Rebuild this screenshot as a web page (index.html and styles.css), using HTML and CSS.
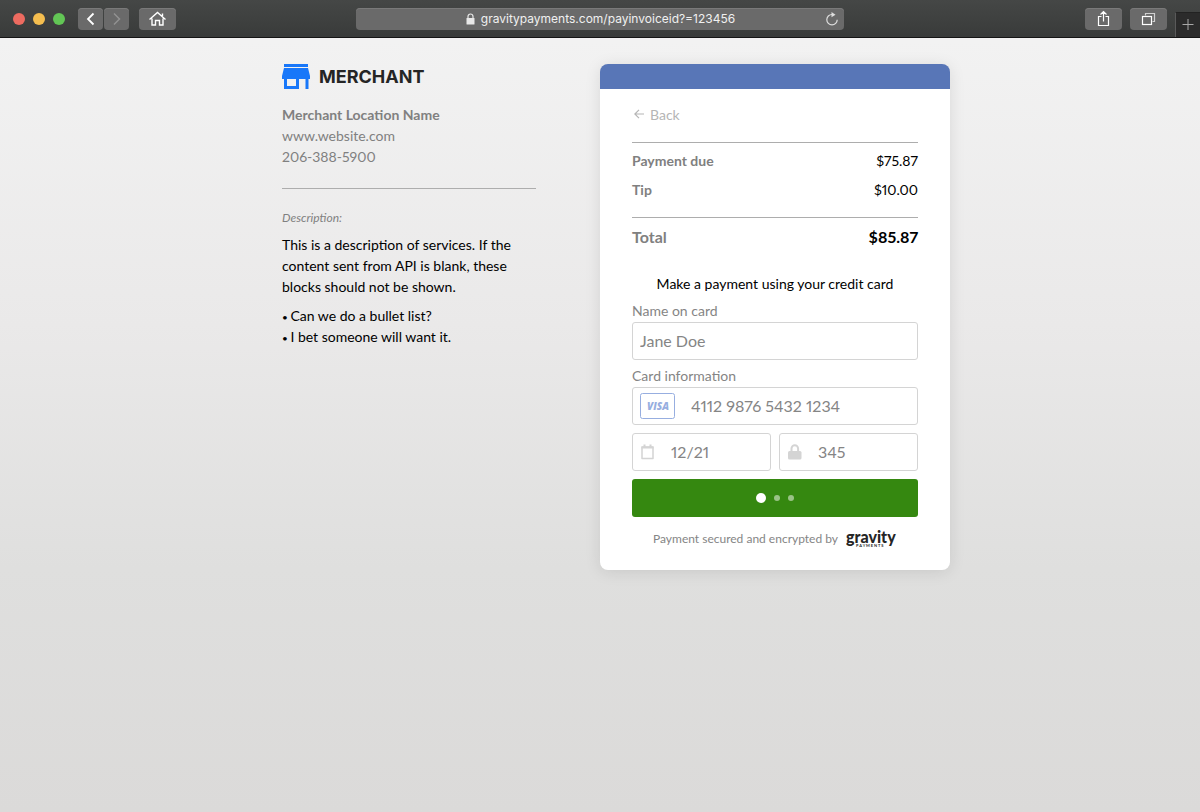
FILE: index.html
```
<!DOCTYPE html>
<html lang="en">
<head>
    <meta charset="UTF-8">
    <meta name="viewport" content="width=device-width, initial-scale=1.0">
    <title>Pay Invoice</title>
    <link rel="stylesheet" href="styles.css">
</head>
<body>

<header class="toolbar">
    <div class="toolbar-left">
        <div class="lights">
            <span class="light red"></span>
            <span class="light yellow"></span>
            <span class="light green"></span>
        </div>
        <div class="history">
            <button type="button" class="tool" aria-label="Previous page">
                <svg width="25" height="22" viewBox="0 0 25 22"><path d="M15.5 5.5L10 11l5.5 5.5" stroke="#fff" stroke-width="1.8"/></svg>
            </button>
            <button type="button" class="tool" aria-label="Next page" disabled>
                <svg width="25" height="22" viewBox="0 0 25 22"><path d="M10 5.5L15.5 11 10 16.5" stroke="#929292" stroke-width="1.5"/></svg>
            </button>
        </div>
        <button type="button" class="tool" aria-label="Home">
            <svg width="37" height="22" viewBox="0 0 37 22"><path d="M10.5 11.5L18.5 4.5l8 7M23.5 8V5.5M13 10.5v6.500h3.5v-4.500h4V17H24v-6.500" stroke="#fff" stroke-width="1.4"/></svg>
        </button>
    </div>
    <div class="address">
        <div class="address-text">
            <svg width="9" height="12" viewBox="0 0 9 12"><path d="M2 6V3.5a2.5 2.5 0 0 1 5 0V6" stroke="#e8e8e8" stroke-width="1.2"/><rect x="0.5" y="5" width="8" height="6.5" rx="0.5" fill="#e8e8e8"/></svg>
            <span>gravitypayments.com/payinvoiceid?=123456</span>
        </div>
        <button type="button" class="reload" aria-label="Reload">
            <svg width="14" height="16" viewBox="0 0 14 16"><path d="M7 3.5A5.2 5.2 0 1 0 12.2 8.7" stroke="#dedede" stroke-width="1.2"/><path d="M6.5 1l4 2.7-4 2.5z" fill="#dedede"/></svg>
        </button>
    </div>
    <div class="toolbar-right">
        <button type="button" class="tool" aria-label="Share">
            <svg width="37" height="22" viewBox="0 0 37 22"><path d="M16.5 8.5h-3V17.5h10v-9h-3M18.5 13.5V4M15.5 6.5l3-3 3 3" stroke="#fff" stroke-width="1.2"/></svg>
        </button>
        <button type="button" class="tool" aria-label="Show tabs">
            <svg width="37" height="22" viewBox="0 0 37 22"><path d="M15.5 7.5v-2h9v8h-2" stroke="#d0d0d0" stroke-width="1.2"/><rect x="12.5" y="8.5" width="9" height="8" stroke="#fff" stroke-width="1.2"/></svg>
        </button>
        <button type="button" class="new-tab" aria-label="New tab">
            <svg width="12" height="12" viewBox="0 0 12 12"><path d="M0.5 5.5h11M6 0v11" stroke="#a8a8a8" stroke-width="1"/></svg>
        </button>
    </div>
</header>

<main class="page">
    <section class="merchant">
        <h1 class="logo">
            <svg width="28" height="25" viewBox="0 0 28 25"><path fill="#1877f9" d="M2 0h24v3H2zM2 4h24L28 12v3h-1.5v10h-3V15h-6.5v10H2V15H0v-3zM5 15v7h9v-7z" fill-rule="evenodd"/></svg>
            <span>MERCHANT</span>
        </h1>
        <address class="contact">
            <strong>Merchant Location Name</strong>
            <a href="#">www.website.com</a>
            <a href="tel:206-388-5900">206-388-5900</a>
        </address>
        <div class="description">
            <h2>Description:</h2>
            <p>This is a description of services. If the content sent from API is blank, these blocks should not be shown.</p>
            <ul>
                <li>Can we do a bullet list?</li>
                <li>I bet someone will want it.</li>
            </ul>
        </div>
    </section>

    <section class="card">
        <a class="back" href="#">
            <svg width="10" height="10" viewBox="0 0 10 10"><path d="M10 5H1M5 0.8L0.8 5 5 9.2" stroke="#b5b5b5" stroke-width="1.2"/></svg>
            Back
        </a>

        <dl class="amounts">
            <div><dt>Payment due</dt><dd>$75.87</dd></div>
            <div><dt>Tip</dt><dd>$10.00</dd></div>
            <div class="total"><dt>Total</dt><dd>$85.87</dd></div>
        </dl>

        <form class="payment">
            <p class="intro">Make a payment using your credit card</p>

            <label for="name">Name on card</label>
            <div class="field">
                <input type="text" id="name" value="Jane Doe">
            </div>

            <label for="number">Card information</label>
            <div class="field">
                <svg width="35" height="26" viewBox="0 0 35 26"><rect x="0.5" y="0.5" width="34" height="25" rx="2" stroke="#97aee0"/><text class="visa" x="18" y="17" text-anchor="middle">VISA</text></svg>
                <input type="text" id="number" value="4112 9876 5432 1234">
            </div>

            <div class="field-row">
                <div class="field">
                    <svg width="15" height="16" viewBox="0 0 15 16"><path d="M2 3h11v11.5H2z" stroke="#d4d4d4" stroke-width="1.5" stroke-linejoin="round"/><path d="M1.5 3.5h12M4.5 0.5v3M10.5 0.5v3" stroke="#d4d4d4" stroke-width="2"/></svg>
                    <input type="text" aria-label="Expiration date" value="12/21">
                </div>
                <div class="field">
                    <svg width="15" height="16" viewBox="0 0 15 16"><path d="M4.5 8V4.5a3.3 3.3 0 0 1 6.6 0V8" stroke="#d4d4d4" stroke-width="2"/><rect x="1" y="7" width="13.5" height="8.5" rx="1.5" fill="#d4d4d4"/></svg>
                    <input type="text" aria-label="Security code" value="345">
                </div>
            </div>

            <button type="submit" class="pay" aria-label="Processing payment">
                <span class="dot active"></span>
                <span class="dot"></span>
                <span class="dot"></span>
            </button>
        </form>

        <footer class="secured">
            <span>Payment secured and encrypted by</span>
            <svg width="51" height="25" viewBox="0 0 51 25" role="img" aria-label="Gravity Payments"><text class="gravity" x="0" y="17">gravity</text><text class="gravity-sub" x="10" y="21">P A Y M E N T S</text></svg>
        </footer>
    </section>
</main>

</body>
</html>
```

FILE: styles.css
```
* {
    box-sizing: border-box;
}

body {
    font-family: Lato, sans-serif;
    font-size: 14px;
    font-variant-numeric: proportional-nums;
    line-height: 21px;
    margin: 0;
    min-height: 100vh;
    color: #000;
    background: linear-gradient(#f2f2f2 5%, #eae9e9 40%, #dfdfde 70%, #dbdad9);
}

svg {
    display: block;
    fill: none;
    flex-shrink: 0;
}

a {
    color: inherit;
    text-decoration: none;
}

button {
    border: none;
    padding: 0;
    cursor: pointer;
}

/* browser toolbar */
.toolbar {
    display: grid;
    grid-template-columns: 1fr minmax(0, 488px) 1fr;
    align-items: center;
    height: 38px;
    background: linear-gradient(#454746, #393b3a);
    border-bottom: 1px solid #151515;
}

.toolbar-left,
.toolbar-right,
.lights,
.history {
    display: flex;
    align-items: center;
}

.toolbar-left {
    padding-left: 13px;
}

.lights {
    gap: 8px;
    margin-right: 13px;
}

.light {
    width: 12px;
    height: 12px;
    border-radius: 50%;
}

.red {
    background-color: #ed6b60;
}

.yellow {
    background-color: #f5be4f;
}

.green {
    background-color: #62c655;
}

.history {
    gap: 1px;
    margin-right: 10px;
}

.tool {
    height: 22px;
    border-radius: 4px;
    background-color: #6a6a6a;
    box-shadow: inset 0 1px #7a7a7a;
}

.address {
    display: flex;
    align-items: center;
    height: 22px;
    padding: 0 5px 0 20px;
    border-radius: 4px;
    background-color: #6a6a6a;
    box-shadow: inset 0 1px #7a7a7a;
    color: #f0f0f0;
    font-family: Inter, sans-serif;
    font-size: 12px;
}

.address-text {
    flex: 1;
    display: flex;
    align-items: center;
    justify-content: center;
    gap: 6px;
}

.reload {
    background: none;
}

.toolbar-right {
    align-self: stretch;
    justify-content: flex-end;
    gap: 8px;
}

.new-tab {
    display: flex;
    align-items: center;
    justify-content: center;
    align-self: flex-end;
    width: 25px;
    height: 25px;
    background-color: #2b2b2b;
    border-left: 1px solid #5a5a5a;
    border-top: 1px solid #222;
}

/* page */
.page {
    display: grid;
    grid-template-columns: 1fr 1fr;
    align-items: start;
    padding: 26px 0;
}

.merchant {
    width: 254px;
    margin-right: 64px;
    justify-self: end;
}

.logo {
    display: flex;
    align-items: center;
    gap: 9px;
    margin: 0 0 15px;
    color: #252525;
    font-family: Inter, sans-serif;
    font-size: 18px;
    font-weight: bold;
    line-height: 25px;
}

.contact {
    display: flex;
    flex-direction: column;
    padding-bottom: 21px;
    border-bottom: 1px solid #adadad;
    color: #808080;
    font-style: normal;
}

.description h2 {
    margin: 18px 0 6px;
    color: #808080;
    font-size: 12px;
    font-style: italic;
    font-weight: normal;
}

.description p {
    margin: 0 0 8px;
}

.description ul {
    margin: 0;
    padding: 0;
    list-style: none;
}

.description li::before {
    content: "• ";
    font-size: 10px;
    line-height: 1;
}

/* payment card */
.card {
    width: 350px;
    padding: 14px 32px 19px;
    border-top: 25px solid #5876b7;
    border-radius: 8px;
    background-color: #fff;
    box-shadow: 0 2px 16px rgba(0, 0, 0, 0.1);
}

.back {
    display: inline-flex;
    align-items: center;
    gap: 6px;
    margin: 0 0 17px 2px;
    color: #b5b5b5;
}

.amounts {
    margin: 0 0 26px;
    padding-top: 7px;
    border-top: 1px solid #adadad;
}

.amounts div {
    display: flex;
    justify-content: space-between;
    margin-bottom: 8px;
}

.amounts dt {
    color: #808080;
    font-weight: bold;
}

.amounts dd {
    margin: 0;
}

.amounts .total {
    margin: 17px 0 0;
    padding-top: 8px;
    border-top: 1px solid #adadad;
    font-size: 16px;
    font-weight: bold;
}

.intro {
    margin: 0 0 6px;
    text-align: center;
}

.payment label {
    display: block;
    padding-bottom: 1px;
    color: #858585;
}

.field {
    display: flex;
    align-items: center;
    flex: 1;
    min-width: 0;
    gap: 16px;
    height: 38px;
    margin-bottom: 5px;
    padding: 0 7px;
    border: 1px solid #d4d4d4;
    border-radius: 3px;
    background-color: #fff;
}

.field input {
    flex: 1;
    min-width: 0;
    padding: 0;
    border: none;
    outline: none;
    background: none;
    color: #858585;
    font-family: inherit;
    font-size: 16px;
    font-variant-numeric: inherit;
}

.field-row {
    display: flex;
    gap: 8px;
    padding: 3px 0;
}

.visa {
    fill: #97aee0;
    font-family: "Open Sans", sans-serif;
    font-size: 10px;
    font-style: italic;
    font-weight: 800;
}

.pay {
    display: flex;
    align-items: center;
    justify-content: center;
    gap: 8px;
    width: 100%;
    height: 38px;
    border-radius: 3px;
    background-color: #358810;
}

.dot {
    width: 6px;
    height: 6px;
    border-radius: 50%;
    background-color: #9ac387;
}

.dot.active {
    width: 10px;
    height: 10px;
    background-color: #fff;
}

.secured {
    display: flex;
    align-items: center;
    justify-content: center;
    gap: 8px;
    margin-top: 9px;
    color: #858585;
    font-size: 12px;
}

.gravity {
    fill: #252525;
    font-family: Lato, sans-serif;
    font-size: 16px;
    font-weight: 900;
}

.gravity-sub {
    fill: #252525;
    font-family: Lato, sans-serif;
    font-size: 4px;
    font-weight: bold;
}
```
